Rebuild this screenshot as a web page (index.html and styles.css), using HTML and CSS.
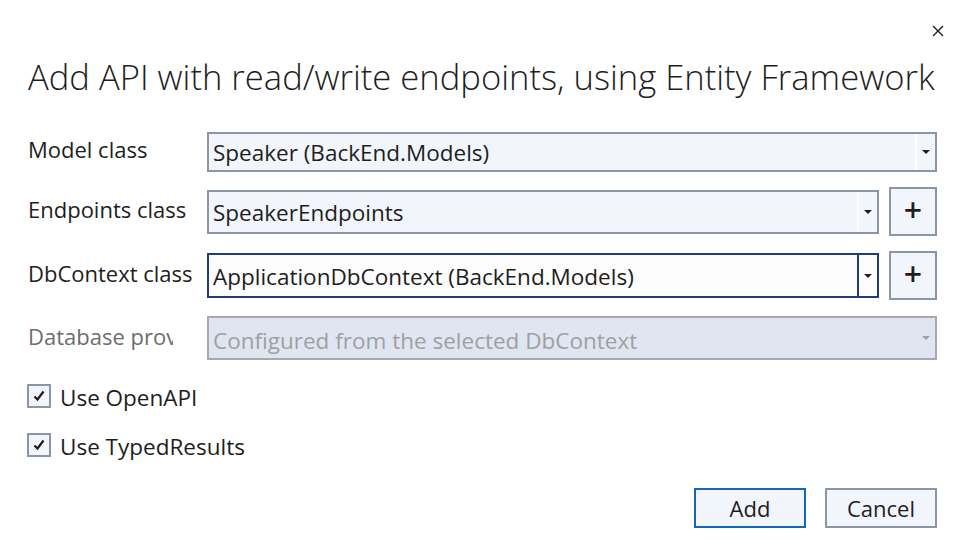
FILE: index.html
```html
<!DOCTYPE html>
<html>
<head>
<meta charset="utf-8">
<link rel="stylesheet" href="styles.css">
</head>
<body>
<div class="dialog">
  <div class="topbar">
    <button class="close" aria-label="Close">
      <svg width="12" height="12" viewBox="0 0 12 12"><path d="M1 1 L11 11 M11 1 L1 11" stroke="#1e1e1e" stroke-width="1.4" fill="none"/></svg>
    </button>
  </div>
  <h1 class="title">Add API with read/write endpoints, using Entity Framework</h1>

  <div class="form">
    <div class="row r1">
      <div class="label">Model class</div>
      <div class="combo wide">
        <span class="value">Speaker (BackEnd.Models)</span>
        <span class="drop"><span class="arrow"></span></span>
      </div>
    </div>
    <div class="row r2">
      <div class="label">Endpoints class</div>
      <div class="combo">
        <span class="value">SpeakerEndpoints</span>
        <span class="drop"><span class="arrow"></span></span>
      </div>
      <div class="plus">+</div>
    </div>
    <div class="row r3">
      <div class="label">DbContext class</div>
      <div class="combo focused">
        <span class="value">ApplicationDbContext (BackEnd.Models)</span>
        <span class="drop"><span class="arrow"></span></span>
      </div>
      <div class="plus">+</div>
    </div>
    <div class="row r4">
      <div class="label disabled clip"><span>Database prov</span></div>
      <div class="combo wide disabled">
        <span class="value">Configured from the selected DbContext</span>
        <span class="drop"><span class="arrow"></span></span>
      </div>
    </div>
  </div>

  <div class="checks">
    <label class="check"><span class="box"><svg width="14" height="14" viewBox="0 0 14 14"><path d="M2.5 7.5 L5.5 10.5 L11.5 2.5" stroke="#1e1e1e" stroke-width="2.2" fill="none"/></svg></span><span>Use OpenAPI</span></label>
    <label class="check"><span class="box"><svg width="14" height="14" viewBox="0 0 14 14"><path d="M2.5 7.5 L5.5 10.5 L11.5 2.5" stroke="#1e1e1e" stroke-width="2.2" fill="none"/></svg></span><span>Use TypedResults</span></label>
  </div>

  <div class="buttons">
    <button class="btn primary">Add</button>
    <button class="btn">Cancel</button>
  </div>
</div>
</body>
</html>
```
FILE: styles.css
```css
* { box-sizing: border-box; }
html, body { margin: 0; padding: 0; background: #ffffff; }
body {
  font-family: "Open Sans", "Noto Sans", sans-serif;
  color: #1e1e1e;
  width: 961px;
  height: 550px;
  overflow: hidden;
}
.dialog {
  padding: 0 24px 0 28px;
  display: flex;
  flex-direction: column;
}
.topbar {
  height: 52px;
  display: flex;
  justify-content: flex-end;
  align-items: flex-start;
}
.close {
  margin-top: 23px;
  margin-right: -9px;
  width: 16px;
  height: 16px;
  padding: 0;
  border: 0;
  background: none;
  display: flex;
  align-items: center;
  justify-content: center;
}
.title {
  margin: 0;
  font-weight: 300;
  font-size: 34.6px;
  line-height: 50px;
  letter-spacing: 0;
  white-space: nowrap;
  height: 50px;
}
.form {
  margin-top: 30px;
  display: grid;
  grid-template-columns: 179px 1fr 48px;
  column-gap: 10px;
  row-gap: 15px;
}
.row {
  display: contents;
}
.label {
  grid-column: 1;
  font-size: 22px;
  display: flex;
  align-items: center;
  white-space: nowrap;
  margin-top: -3px;
}
.label.disabled { color: #6d6d6d; }
.label.clip {
  width: 145px;
  overflow: hidden;
}
.r1 .label, .r1 .combo { grid-row: 1; height: 40px; }
.r2 > * { grid-row: 2; }
.r3 > * { grid-row: 3; }
.r4 > * { grid-row: 4; }
.r2 .label, .r3 .label { height: 49px; }
.r4 .label { height: 48px; }
.combo {
  grid-column: 2;
  align-self: center;
  height: 44px;
  border: 2px solid #8a96a8;
  background: #f2f5fc;
  display: flex;
  align-items: center;
  margin-left: -10px;
}
.combo.wide { grid-column: 2 / 4; }
.r1 .combo { height: 40px; }
.r3 .combo { height: 45px; }
.combo .value {
  flex: 1;
  padding-left: 4px;
  font-size: 22.5px;
  white-space: nowrap;
  overflow: hidden;
  margin-top: 1px;
}
.combo .drop {
  width: 20px;
  align-self: stretch;
  border-left: 2px solid #ffffff;
  display: flex;
  align-items: center;
  justify-content: center;
}
.arrow {
  width: 0;
  height: 0;
  border-left: 4px solid transparent;
  border-right: 4px solid transparent;
  border-top: 4px solid #1e1e1e;
}
.combo.focused {
  background: #fcfcfc;
  border-color: #1f3b78;
}
.combo.focused .drop { border-left-color: #1f3b78; }
.combo.disabled {
  background: #dfe6f2;
  border-color: #a8a8a8;
}
.combo.disabled .value { color: #a0a0a0; margin-top: 5px; }
.combo.disabled .drop { border-left-color: transparent; }
.combo.disabled .arrow { border-top-color: #a0a0a0; }
.plus {
  grid-column: 3;
  height: 49px;
  border: 2px solid #8a96a8;
  background: #f2f5fc;
  display: flex;
  align-items: center;
  justify-content: center;
  font-size: 32px;
  font-weight: 600;
  line-height: 1;
  padding-bottom: 4px;
}
.checks {
  margin-top: 24px;
  display: flex;
  flex-direction: column;
  gap: 25px;
}
.check {
  display: flex;
  align-items: center;
  gap: 9px;
  font-size: 22.5px;
  height: 24px;
  margin-left: -1px;
}
.check > span:last-child { margin-top: 2px; }
.box {
  width: 24px;
  height: 24px;
  border: 2px solid #8a96a8;
  background: #f2f5fc;
  display: flex;
  align-items: center;
  justify-content: center;
}
.buttons {
  margin-top: 31px;
  display: flex;
  justify-content: flex-end;
  gap: 19px;
}
.btn {
  width: 112px;
  height: 40px;
  border: 2px solid #8a96a8;
  background: #f2f5fc;
  font-family: "Open Sans", "Noto Sans", sans-serif;
  font-size: 22px;
  color: #1e1e1e;
  padding: 0;
}
.btn.primary { border-color: #1468b9; }
```
